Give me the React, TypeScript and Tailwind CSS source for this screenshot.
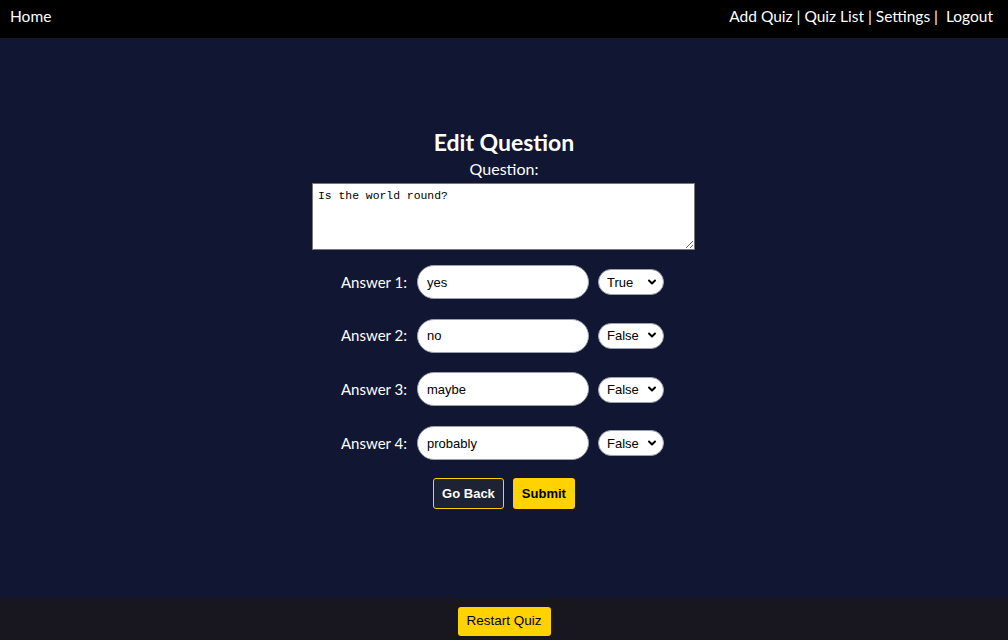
import { ChevronDown } from 'lucide-react';

const answers = [
  { text: 'yes', correct: 'True' },
  { text: 'no', correct: 'False' },
  { text: 'maybe', correct: 'False' },
  { text: 'probably', correct: 'False' },
];

function NavBar() {
  return (
    <nav className="h-[38px] bg-black text-white flex justify-between items-start pt-[5px] pl-[10px] pr-[15px] text-[15.5px] leading-[22px] font-['Lato',sans-serif]">
      <a href="#">Home</a>
      <div className="whitespace-pre">
        <a href="#">Add Quiz</a> | <a href="#">Quiz List</a> | <a href="#">Settings</a> |{'  '}<a href="#">Logout</a>
      </div>
    </nav>
  );
}

function AnswerRow({ index, text, correct }: { index: number; text: string; correct: string }) {
  return (
    <div className="flex items-center h-[34px]">
      <label className="text-white text-[15px] font-['Lato',sans-serif] mr-[10px]">Answer {index}:</label>
      <input
        defaultValue={text}
        className="w-[172px] h-[34px] rounded-full bg-white border border-gray-400 pl-[9px] text-[13px] text-black font-['Liberation_Sans',sans-serif] outline-none"
      />
      <div className="relative ml-[9px]">
        <select
          defaultValue={correct}
          className="appearance-none w-[66px] h-[26px] rounded-full bg-white border border-gray-400 pl-[8px] text-[13px] text-black font-['Liberation_Sans',sans-serif] outline-none"
        >
          <option>True</option>
          <option>False</option>
        </select>
        <ChevronDown className="absolute right-[6px] top-[7px] size-[12px] text-black pointer-events-none" strokeWidth={4} />
      </div>
    </div>
  );
}

export default function App() {
  return (
    <div className="w-full h-[640px] flex flex-col bg-[#111633]">
      <NavBar />
      <main className="flex-1 flex flex-col items-center pt-[90px]">
        <h1 className="text-white text-[23px] leading-[29px] font-bold font-['Lato',sans-serif]">Edit Question</h1>
        <p className="text-white text-[16px] leading-[22px] font-['Lato',sans-serif] mt-[1px]">Question:</p>
        <textarea
          defaultValue="Is the world round?"
          className="mt-[3px] ml-[-1px] w-[383px] h-[67px] bg-white border border-[#767676] px-[5px] pt-[4px] text-[11.4px] text-black font-['Liberation_Mono',monospace]"
        />
        <div className="flex flex-col gap-[19.7px] mt-[15px] ml-[-3px]">
          {answers.map((a, i) => (
            <AnswerRow key={i} index={i + 1} text={a.text} correct={a.correct} />
          ))}
        </div>
        <div className="flex gap-[9px] mt-[18px]">
          <button className="h-[31px] px-[8px] rounded-[3px] border border-[#ffd200] bg-[#1e2235] text-white text-[13px] font-bold font-['Liberation_Sans',sans-serif]">
            Go Back
          </button>
          <button className="h-[31px] px-[9px] rounded-[3px] bg-[#ffd200] text-black text-[13px] font-bold font-['Liberation_Sans',sans-serif]">
            Submit
          </button>
        </div>
      </main>
      <footer className="h-[42px] bg-[#18171f] flex justify-center items-start pt-[9px]">
        <button className="h-[29px] w-[93px] rounded-[3px] bg-[#ffd200] text-black text-[13.5px] font-['Liberation_Sans',sans-serif]">
          Restart Quiz
        </button>
      </footer>
    </div>
  );
}
